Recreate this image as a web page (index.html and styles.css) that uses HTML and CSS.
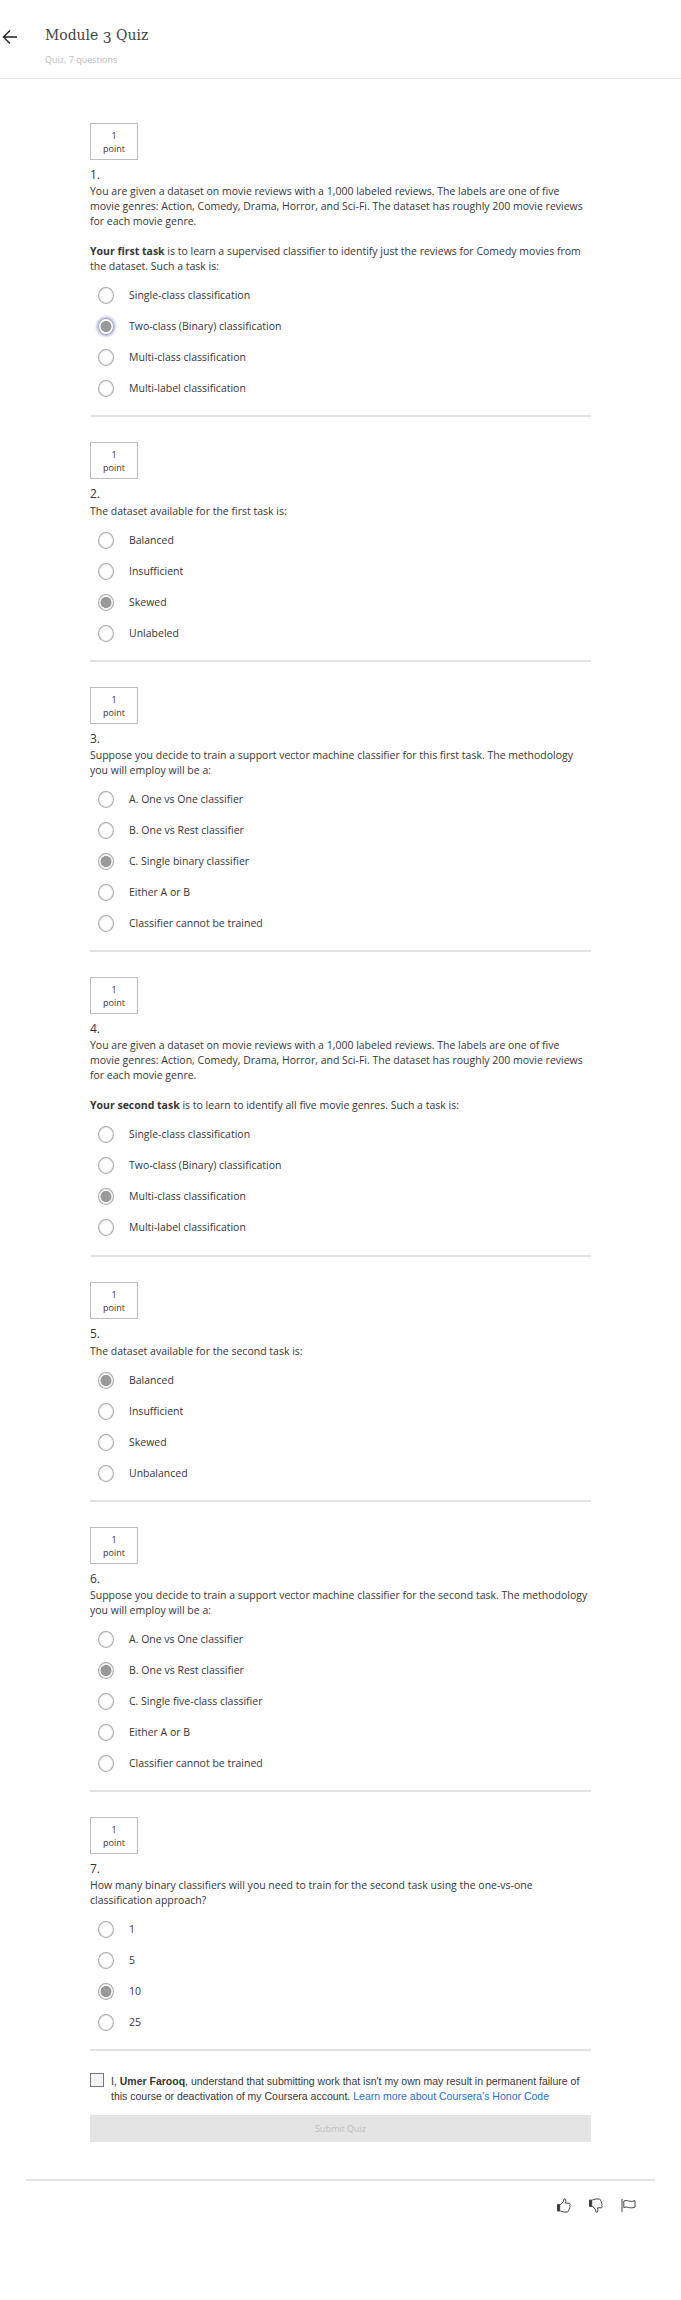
FILE: index.html
```html
<!DOCTYPE html>
<html lang="en">
<head>
<meta charset="utf-8">
<title>Module 3 Quiz</title>
<link rel="stylesheet" href="styles.css">
</head>
<body>
<header class="header">
  <svg class="back" viewBox="0 0 16 16"><path d="M15 8H1.5M8 1.5L1.5 8L8 14.5"/></svg>
  <div>
    <h1 class="title">Module <span class="old">3</span> Quiz</h1>
    <p class="subtitle">Quiz, 7 questions</p>
  </div>
</header>
<main class="quiz">
  <section class="question q1">
    <div class="points">1<br>point</div>
    <div class="number">1.</div>
    <div class="prompt">You are given a dataset on movie reviews with a 1,000 labeled reviews. The labels are one of five<br>movie genres: Action, Comedy, Drama, Horror, and Sci-Fi. The dataset has roughly 200 movie reviews<br>for each movie genre.<br><br><b>Your first task</b> is to learn a supervised classifier to identify just the reviews for Comedy movies from<br>the dataset. Such a task is:</div>
    <ul class="options">
      <li><i class="radio"></i>Single-class classification</li>
      <li><i class="radio on focus"></i>Two-class (Binary) classification</li>
      <li><i class="radio"></i>Multi-class classification</li>
      <li><i class="radio"></i>Multi-label classification</li>
    </ul>
  </section>
  <section class="question short">
    <div class="points">1<br>point</div>
    <div class="number">2.</div>
    <div class="prompt">The dataset available for the first task is:</div>
    <ul class="options">
      <li><i class="radio"></i>Balanced</li>
      <li><i class="radio"></i>Insufficient</li>
      <li><i class="radio on"></i>Skewed</li>
      <li><i class="radio"></i>Unlabeled</li>
    </ul>
  </section>
  <section class="question medium">
    <div class="points">1<br>point</div>
    <div class="number">3.</div>
    <div class="prompt">Suppose you decide to train a support vector machine classifier for this first task. The methodology<br>you will employ will be a:</div>
    <ul class="options">
      <li><i class="radio"></i>A. One vs One classifier</li>
      <li><i class="radio"></i>B. One vs Rest classifier</li>
      <li><i class="radio on"></i>C. Single binary classifier</li>
      <li><i class="radio"></i>Either A or B</li>
      <li><i class="radio"></i>Classifier cannot be trained</li>
    </ul>
  </section>
  <section class="question long">
    <div class="points">1<br>point</div>
    <div class="number">4.</div>
    <div class="prompt">You are given a dataset on movie reviews with a 1,000 labeled reviews. The labels are one of five<br>movie genres: Action, Comedy, Drama, Horror, and Sci-Fi. The dataset has roughly 200 movie reviews<br>for each movie genre.<br><br><b>Your second task</b> is to learn to identify all five movie genres. Such a task is:</div>
    <ul class="options">
      <li><i class="radio"></i>Single-class classification</li>
      <li><i class="radio"></i>Two-class (Binary) classification</li>
      <li><i class="radio on"></i>Multi-class classification</li>
      <li><i class="radio"></i>Multi-label classification</li>
    </ul>
  </section>
  <section class="question short">
    <div class="points">1<br>point</div>
    <div class="number">5.</div>
    <div class="prompt">The dataset available for the second task is:</div>
    <ul class="options">
      <li><i class="radio on"></i>Balanced</li>
      <li><i class="radio"></i>Insufficient</li>
      <li><i class="radio"></i>Skewed</li>
      <li><i class="radio"></i>Unbalanced</li>
    </ul>
  </section>
  <section class="question medium">
    <div class="points">1<br>point</div>
    <div class="number">6.</div>
    <div class="prompt">Suppose you decide to train a support vector machine classifier for the second task. The methodology<br>you will employ will be a:</div>
    <ul class="options">
      <li><i class="radio"></i>A. One vs One classifier</li>
      <li><i class="radio on"></i>B. One vs Rest classifier</li>
      <li><i class="radio"></i>C. Single five-class classifier</li>
      <li><i class="radio"></i>Either A or B</li>
      <li><i class="radio"></i>Classifier cannot be trained</li>
    </ul>
  </section>
  <section class="question last">
    <div class="points">1<br>point</div>
    <div class="number">7.</div>
    <div class="prompt">How many binary classifiers will you need to train for the second task using the one-vs-one<br>classification approach?</div>
    <ul class="options">
      <li><i class="radio"></i>1</li>
      <li><i class="radio"></i>5</li>
      <li><i class="radio on"></i>10</li>
      <li><i class="radio"></i>25</li>
    </ul>
  </section>
  <div class="honor">
    <i class="checkbox"></i>
    <p class="pledge">I, <b>Umer Farooq</b>, understand that submitting work that isn't my own may result in permanent failure of<br>this course or deactivation of my Coursera account. <a class="link">Learn more about Coursera's Honor Code</a></p>
  </div>
  <button class="submit" disabled>Submit Quiz</button>
</main>
<footer class="footer">
  <svg class="icon" viewBox="0 0 14 15"><path class="fill" d="M.5 6.5h2.2v6.5H.5z"/><path d="M3.3 7L6.2 3.7L7.2.7C9 .7 9.3 2.4 8.4 5.2H12.3C13.5 5.4 13.4 7 12.7 7.6C13.4 8.6 13 9.6 12.3 10C12.7 11 12.3 11.8 11.6 12.2C11.6 13.4 11 14 10 14H7C5.5 14 4.5 13.2 3.3 13"/></svg>
  <svg class="icon" viewBox="0 0 14 15"><g transform="translate(0 15) scale(1 -1)"><path class="fill" d="M.5 6.5h2.2v6.5H.5z"/><path d="M3.3 7L6.2 3.7L7.2.7C9 .7 9.3 2.4 8.4 5.2H12.3C13.5 5.4 13.4 7 12.7 7.6C13.4 8.6 13 9.6 12.3 10C12.7 11 12.3 11.8 11.6 12.2C11.6 13.4 11 14 10 14H7C5.5 14 4.5 13.2 3.3 13"/></g></svg>
  <svg class="icon flag" viewBox="0 0 15 15"><path d="M1 1V14M2.8 3.1C6 1.3 8 4.7 14 2.7V9.2C8 11.2 6 7.8 2.8 9.6z"/></svg>
</footer>
</body>
</html>
```
FILE: styles.css
```css
* { box-sizing: border-box; }
body { margin: 0; background: #fff; color: #373737; font: 10.5px/15px "Open Sans", sans-serif; }
.header { height: 79px; border-bottom: 1px solid #e3e3e3; display: flex; padding: 0 0 0 2px; }
.back { width: 16px; height: 16px; margin: 29px 27px 0 0; fill: none; stroke: #222; stroke-width: 1.4; }
.title { margin: 25px 0 0; font: 400 15.5px/20px "DejaVu Serif Condensed", "DejaVu Serif", serif; font-stretch: condensed; white-space: nowrap; color: #444; }
.old { vertical-align: -3px; line-height: 1; }
.subtitle { margin: 6px 0 0; font-size: 9px; line-height: 14px; color: #bdbdbd; }
.quiz { width: 501px; margin: 44px 0 0 90px; white-space: nowrap; }
.question { display: flex; flex-direction: column; padding-bottom: 25px; }
.question::after { content: ""; margin-top: auto; height: 2px; background: #e3e3e3; }
.q1 { height: 319px; }
.short { height: 245px; }
.medium { height: 290px; }
.long { height: 305px; }
.last { height: 257px; padding-bottom: 23px; }
.points { width: 48px; height: 37px; border: 1px solid #bdbdbd; padding-top: 5px; font-size: 9px; line-height: 13px; text-align: center; }
.number { margin-top: 7px; font-size: 12px; line-height: 16px; }
.prompt { padding-top: 1px; }
.short .prompt { padding-top: 2px; }
.options { list-style: none; margin: 6px 0 0; padding: 0 0 0 8px; }
.options li { display: flex; align-items: center; gap: 15px; height: 31px; }
.radio { width: 16px; height: 17px; border: 1px solid #aaa; border-radius: 50%; box-shadow: inset 0 0 2px #ccc; }
.on { border-color: #aaa; background: radial-gradient(circle, #999 0 5.2px, #fff 5.8px); }
.focus { box-shadow: 0 0 3px 1px #9a98f0; }
.honor { display: flex; gap: 7px; }
.checkbox { width: 14px; height: 14px; margin-top: -1px; border: 1px solid #777; background: #f4f4f4; }
.pledge { margin: 0; font: 10.5px/15px "Liberation Sans", sans-serif; }
.link { color: #2a6fd6; }
.submit { display: block; width: 501px; height: 27px; margin: 11px 0 0; border: 0; background: #e4e4e4; color: #bdbdbd; font: 9px/27px "Open Sans", sans-serif; padding: 0; }
.footer { margin: 37px 26px 0; height: 60px; border-top: 2px solid #e3e3e3; display: flex; justify-content: flex-end; padding: 17px 19px 0; gap: 18px; }
.icon { width: 14px; height: 15px; fill: none; stroke: #444; }
.icon .fill { fill: #333; }
.flag { width: 15px; }
```
